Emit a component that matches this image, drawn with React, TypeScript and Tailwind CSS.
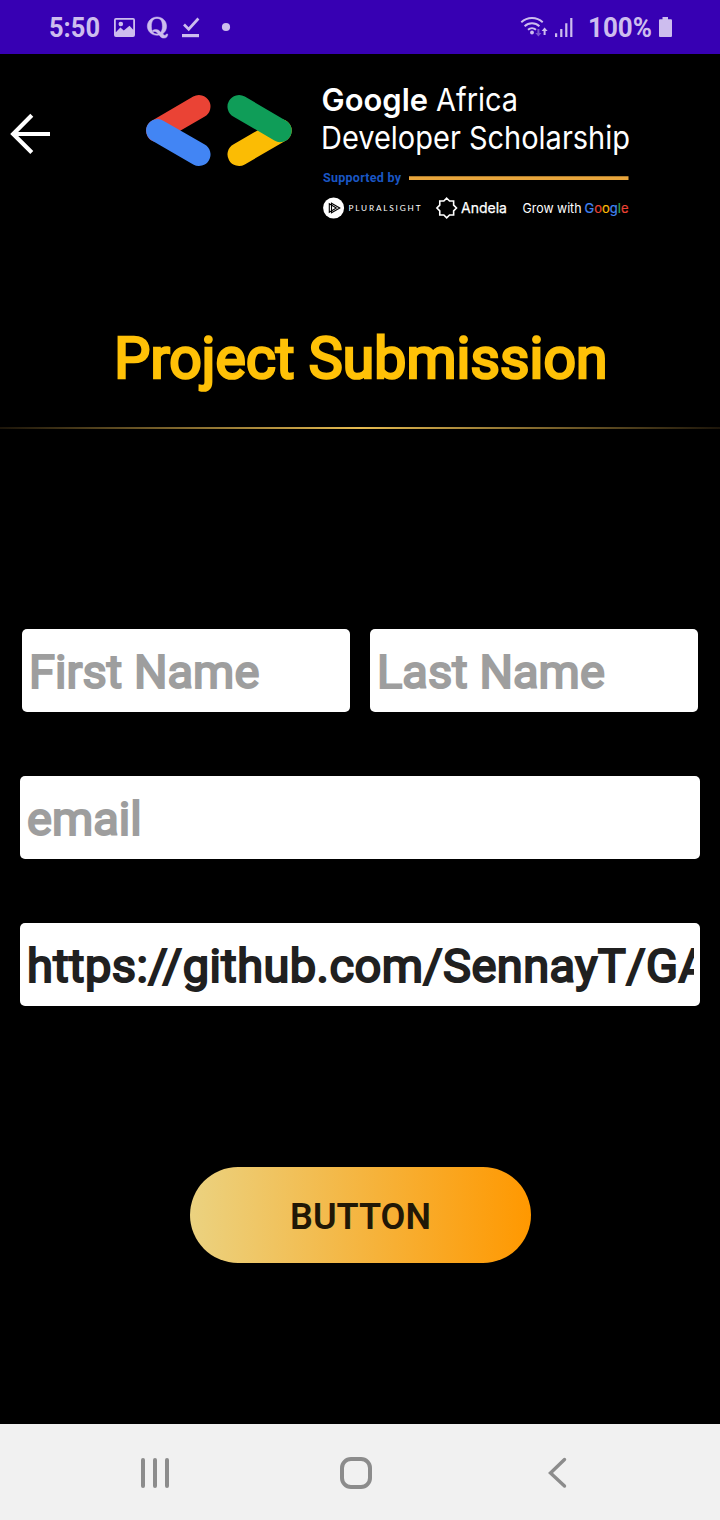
function StatusBar() {
  return (
    <header className="h-[54px] shrink-0 bg-[#3700b3]">
      <svg width="720" height="54" viewBox="0 0 720 54" fill="#cdbdee" className="block font-['Roboto',sans-serif]">
        <text x="49" y="37" fontSize="27" fontWeight="700" textLength="51" lengthAdjust="spacingAndGlyphs">5:50</text>
        <path fillRule="evenodd" d="M116 18h17a2 2 0 0 1 2 2v15a2 2 0 0 1-2 2h-17a2 2 0 0 1-2-2V20a2 2 0 0 1 2-2Zm-.2 1.8v12.4l4.6-4.7 3.4 3 5.7-4.8 3.7 4v-9.900h-17.400Zm5 1.900a2.300 2.300 0 1 1 0 4.600 2.300 2.300 0 0 1 0-4.600Z" />
        <path fillRule="evenodd" d="M157 17c5.400 0 9.600 4 9.600 9.300 0 3.300-1.500 5.900-3.800 7.500.8 1.200 1.400 1.500 2.200 1.500.9 0 1.300-.6 1.400-1.300h1.300c.2 2-.9 4.100-3.700 4.100-2.400 0-3.700-1.200-4.900-3.100-.7.200-1.400.3-2.100.3-5.200 0-9.700-3.900-9.700-9S151.800 17 157 17Zm0 1.400c-3.900 0-5.600 3-5.600 7.900s1.700 7.700 5.600 7.700l1.100-.1c-.9-1.500-1.900-2.500-3.500-2.500-.6 0-1.100.1-1.500.4l-.6-1.200c.8-.7 1.900-1.100 3.200-1.100 2.500 0 3.900 1.300 4.900 2.800 1.200-1.200 1.800-3.200 1.800-6 0-4.900-1.500-7.900-5.400-7.900Z" stroke="#cdbdee" strokeWidth=".5" />
        <path d="m184 24.500 4.700 4.700 9.700-10.700" fill="none" stroke="#cdbdee" strokeWidth="2.700" />
        <path d="M182 34h17v3.200h-17z" />
        <circle cx="226" cy="27" r="4.100" />
        <g fill="none" stroke="#cdbdee" strokeWidth="1.900">
          <path d="M521.300 22.300a15.500 15.500 0 0 1 21.400 0" />
          <path d="M524.600 26.200a10.600 10.600 0 0 1 14.800 0" />
          <path d="M528 29.700a6 6 0 0 1 8 0" />
        </g>
        <circle cx="532" cy="32.500" r="1.900" />
        <path d="M543.600 35v-4h-2l3-3.600 3 3.600h-2v4z" />
        <path opacity=".45" d="M537.400 29v4h-2l3 3.600 3-3.600h-2v-4z" />
        <path d="M555 33.200h2.200v3.800H555zM560.200 29h2.200v8h-2.200zM565.200 23.200h2.200V37h-2.200zM570.200 18h2.200v19h-2.200z" />
        <text x="588" y="37" fontSize="27" fontWeight="700" textLength="64" lengthAdjust="spacingAndGlyphs">100%</text>
        <path d="M662.500 17h5.500v2.300h2.700c.8 0 1.300.5 1.300 1.300v15.200c0 .8-.5 1.200-1.300 1.200h-10.400c-.8 0-1.300-.4-1.300-1.200V20.600c0-.8.500-1.300 1.300-1.300h2.200z" />
      </svg>
    </header>
  );
}

const andelaPoints = Array.from({ length: 16 }, (_, i) => {
  const r = i % 2 === 0 ? 9.8 : 7.5;
  const a = (i * Math.PI) / 8;
  return `${(446.7 + r * Math.sin(a)).toFixed(2)},${(208 - r * Math.cos(a)).toFixed(2)}`;
}).join(" ");

function Banner() {
  return (
    <div className="h-[196px] shrink-0">
      <svg width="720" height="196" viewBox="0 54 720 196" className="block font-['Inter',sans-serif]" fill="#fff">
        <path d="M50 134H13.500M31.800 115.300 13.200 134l18.600 18.500" fill="none" stroke="#fff" strokeWidth="4.200" />
        <g strokeWidth="23" strokeLinecap="round">
          <path d="M199 106.500 157.600 130.600" stroke="#ea4335" />
          <path d="M157.600 130.600 199 154.500" stroke="#4285f4" />
          <path d="M239 154.500 280.200 130.600" stroke="#fbbc04" />
          <path d="M239 106.500 280.200 130.600" stroke="#0f9d58" />
        </g>
        <text x="321.500" y="110.500" fontSize="31.500" fontWeight="600" textLength="106.500" lengthAdjust="spacingAndGlyphs">Google</text>
        <text x="436" y="110.500" fontSize="31.500" textLength="82" lengthAdjust="spacingAndGlyphs">Africa</text>
        <text x="321" y="149" fontSize="31.500" textLength="309" lengthAdjust="spacingAndGlyphs">Developer Scholarship</text>
        <text x="323" y="182" fontSize="12.500" fontWeight="700" fill="#1a56c4" textLength="78" className="font-['Roboto',sans-serif]">Supported by</text>
        <path d="M409 176.300h219.500v3.600H409z" fill="#e9a63c" />
        <circle cx="333.600" cy="208" r="10.500" />
        <g fill="none" stroke="#000" strokeWidth="1.100">
          <path d="M331.500 203.200v9.600l8.300-4.800z" />
          <path d="M329.300 203.700v8.600l7-4.300z" />
        </g>
        <text x="348.500" y="211" fontSize="8.200" textLength="72" className="font-['Lato',sans-serif]">PLURALSIGHT</text>
        <polygon points={andelaPoints} fill="none" stroke="#fff" strokeWidth="1.600" />
        <text x="461" y="213.300" fontSize="14.500" stroke="#fff" strokeWidth=".25" textLength="46" lengthAdjust="spacingAndGlyphs">Andela</text>
        <text x="522.500" y="213.300" fontSize="13" textLength="59" lengthAdjust="spacingAndGlyphs">Grow with</text>
        <text x="584.500" y="213.300" fontSize="13" strokeWidth=".2" textLength="44" lengthAdjust="spacingAndGlyphs">
          <tspan fill="#4285f4" stroke="#4285f4">G</tspan><tspan fill="#ea4335" stroke="#ea4335">o</tspan><tspan fill="#fbbc04" stroke="#fbbc04">o</tspan><tspan fill="#4285f4" stroke="#4285f4">g</tspan><tspan fill="#34a853" stroke="#34a853">l</tspan><tspan fill="#ea4335" stroke="#ea4335">e</tspan>
        </text>
      </svg>
    </div>
  );
}

const field =
  "block h-[83px] min-w-0 rounded-[5px] bg-white pr-[6px] pl-[7px] pt-[1px] text-[47px] tracking-[0.42px] font-normal [-webkit-text-stroke:2.1px_currentColor] text-[#202020] outline-none placeholder:tracking-[0.05px] placeholder:text-[#9e9e9e] placeholder:opacity-100";

function NavBar() {
  return (
    <nav className="h-24 shrink-0 bg-[#f1f1f1]">
      <svg width="720" height="96" viewBox="0 1424 720 96" className="block" fill="none" stroke="#8c8c8c" strokeWidth="4" strokeLinecap="round">
        <path d="M143 1460v26M155 1460v26M167 1460v26" />
        <rect x="342" y="1459" width="28" height="28" rx="9" />
        <path d="M564.500 1459.500 550.500 1473l14 13" strokeWidth="3.400" />
      </svg>
    </nav>
  );
}

export default function App() {
  return (
    <div className="flex h-[1520px] w-[720px] flex-col overflow-hidden bg-black font-['Roboto',sans-serif]">
      <StatusBar />
      <Banner />
      <main className="flex flex-1 flex-col">
        <h1 className="mt-[74px] pl-[2px] text-center text-[57px] leading-[70px] font-normal tracking-[0.1px] whitespace-nowrap text-[#ffc107] [-webkit-text-stroke:2.7px_currentColor]">Project Submission</h1>
        <div className="mt-[33px] h-[2px] bg-linear-to-r/srgb from-[#1c150a] via-[#e6bb50] to-[#1c150a]" />
        <form className="mt-[200px] flex flex-col px-5" onSubmit={(e) => e.preventDefault()}>
          <div className="flex gap-5 px-[2px]">
            <input className={`${field} flex-1`} placeholder="First Name" />
            <input className={`${field} flex-1`} placeholder="Last Name" />
          </div>
          <input className={`${field} mt-16`} placeholder="email" />
          <input className={`${field} mt-16`} defaultValue="https://github.com/SennayT/GADS" />
          <button className="mt-[161px] h-24 w-[341px] self-center rounded-full bg-linear-to-r/srgb from-[#ebd280] to-[#ff9800] pt-[3px] pl-[1px] text-[36px] font-semibold text-[#211806]">
            BUTTON
          </button>
        </form>
      </main>
      <NavBar />
    </div>
  );
}
